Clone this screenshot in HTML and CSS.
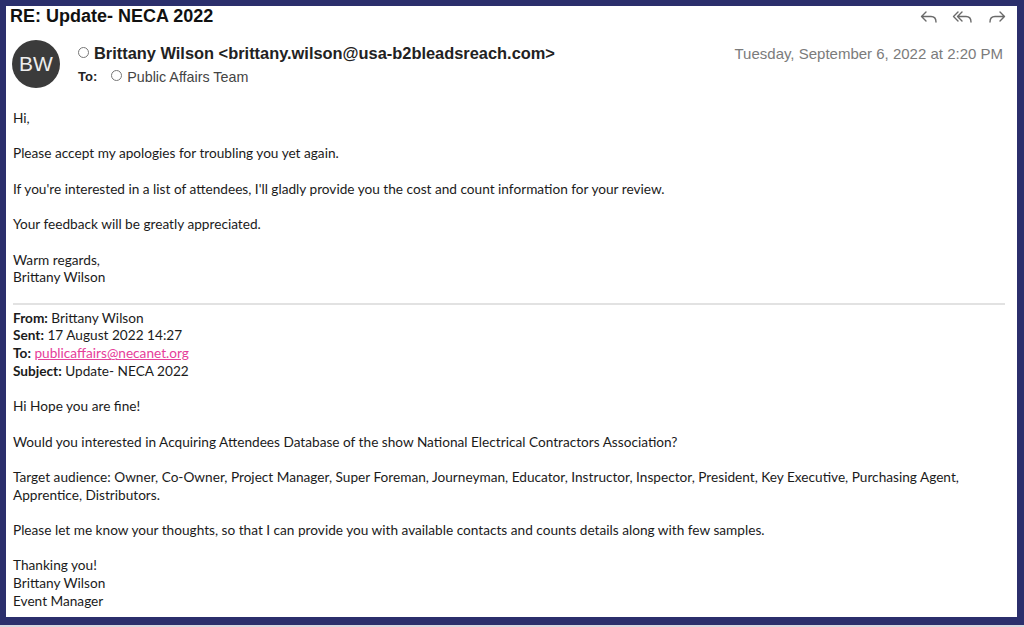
FILE: index.html
```html
<!DOCTYPE html>
<html lang="en">
<head>
  <meta charset="UTF-8">
  <title>RE: Update- NECA 2022</title>
  <link rel="stylesheet" href="styles.css">
</head>
<body>
  <div class="frame">
    <div class="mail">

      <!-- Subject bar with the reply / forward buttons -->
      <div class="title-row">
        <h1 class="subject">RE: Update- NECA 2022</h1>
        <div class="actions">
          <svg class="icon" viewBox="0 0 20 16" width="20" height="16">
            <path d="M7 3 L2.5 7.5 L7 12 M2.5 7.5 H12 C15.5 7.5 17 9.5 17 13" fill="none" stroke="#6a6a6a" stroke-width="1.4" stroke-linecap="round" stroke-linejoin="round"/>
          </svg>
          <svg class="icon" viewBox="0 0 22 16" width="22" height="16">
            <path d="M6 3 L1.5 7.5 L6 12" fill="none" stroke="#6a6a6a" stroke-width="1.4" stroke-linecap="round" stroke-linejoin="round"/>
            <path d="M10 3 L5.5 7.5 L10 12 M5.5 7.5 H14 C17.5 7.5 19 9.5 19 13" fill="none" stroke="#6a6a6a" stroke-width="1.4" stroke-linecap="round" stroke-linejoin="round"/>
          </svg>
          <svg class="icon" viewBox="0 0 20 16" width="20" height="16">
            <path d="M13 3 L17.5 7.5 L13 12 M17.5 7.5 H8 C4.5 7.5 3 9.5 3 13" fill="none" stroke="#6a6a6a" stroke-width="1.4" stroke-linecap="round" stroke-linejoin="round"/>
          </svg>
        </div>
      </div>

      <!-- Sender block -->
      <div class="sender-row">
        <div class="avatar">BW</div>
        <div class="meta">
          <div class="from-line">
            <span class="from"><span class="dot"></span>Brittany Wilson &lt;brittany.wilson@usa-b2bleadsreach.com&gt;</span>
            <span class="date">Tuesday, September 6, 2022 at 2:20 PM</span>
          </div>
          <div class="to-line">
            <span class="to-label">To:</span>
            <span class="to-name"><span class="dot small"></span>Public Affairs Team</span>
          </div>
        </div>
      </div>

      <!-- Message body -->
      <div class="body">
        <p>Hi,</p>
        <p>Please accept my apologies for troubling you yet again.</p>
        <p>If you're interested in a list of attendees, I'll gladly provide you the cost and count information for your review.</p>
        <p>Your feedback will be greatly appreciated.</p>
        <p>Warm regards,<br>Brittany Wilson</p>

        <hr class="divider">

        <p class="quoted-head">
          <b>From:</b> Brittany Wilson<br>
          <b>Sent:</b> 17 August 2022 14:27<br>
          <b>To:</b> <a href="#">publicaffairs@necanet.org</a><br>
          <b>Subject:</b> Update- NECA 2022
        </p>
        <p>Hi Hope you are fine!</p>
        <p>Would you interested in Acquiring Attendees Database of the show National Electrical Contractors Association?</p>
        <p>Target audience: Owner, Co-Owner, Project Manager, Super Foreman, Journeyman, Educator, Instructor, Inspector, President, Key Executive, Purchasing Agent, Apprentice, Distributors.</p>
        <p>Please let me know your thoughts, so that I can provide you with available contacts and counts details along with few samples.</p>
        <p>Thanking you!<br>Brittany Wilson<br>Event Manager</p>
      </div>

    </div>
  </div>
</body>
</html>
```

FILE: styles.css
```css
/* Screenshot frame around a mail message */
body {
  margin: 0;
  background: #d6d7df;
  font-family: "Liberation Sans", Arial, Helvetica, sans-serif;
}
.frame {
  height: 625px;
  box-sizing: border-box;
  border: solid #2b2f6c;
  border-width: 6px 7px 8px 6px;
  background: #fff;
}
.mail {
  height: 100%;
  overflow: hidden;
}
.title-row {
  display: flex;
  justify-content: space-between;
  align-items: flex-start;
  padding: 0 10px 0 4px;
}
.subject {
  margin: 0;
  font-size: 18px;
  line-height: 20px;
  font-weight: bold;
  color: #111;
}
.actions {
  display: flex;
  gap: 13px;
  padding-top: 3px;
}
.icon {
  display: block;
}
.sender-row {
  display: flex;
  align-items: center;
  padding: 14px 14px 0 6px;
}
.avatar {
  width: 48px;
  height: 48px;
  border-radius: 50%;
  background: #3b3b3b;
  color: #eee;
  font-size: 21px;
  display: flex;
  align-items: center;
  justify-content: center;
  flex-shrink: 0;
}
.meta {
  flex: 1;
  margin-left: 18px;
  padding-top: 1px;
}
.from-line {
  display: flex;
  justify-content: space-between;
  align-items: baseline;
}
.from {
  font-size: 16.4px;
  font-weight: bold;
  color: #222;
}
.date {
  font-size: 15px;
  color: #7b7b7b;
}
.dot {
  display: inline-block;
  width: 9px;
  height: 9px;
  border: 1px solid #777;
  border-radius: 50%;
  margin-right: 5px;
  vertical-align: 1px;
}
.dot.small {
  width: 9px;
  height: 9px;
  margin-right: 5px;
}
.to-line {
  margin-top: 6px;
  font-size: 14.3px;
  display: flex;
  gap: 14px;
}
.to-label {
  font-weight: bold;
  font-size: 13px;
  color: #222;
}
.to-name {
  color: #444;
}
.body {
  padding: 22px 12px 0 7px;
  font-family: Lato, "Open Sans", sans-serif;
  font-size: 13.65px;
  line-height: 17.7px;
  color: #1b1b1b;
}
.body p {
  margin: 0 0 17.7px;
}
.divider {
  border: none;
  border-top: 2px solid #e2e2e2;
  margin: -2px 0 5px;
}
.quoted-head b {
  font-weight: bold;
}
.body a {
  color: #e6409a;
}
```
